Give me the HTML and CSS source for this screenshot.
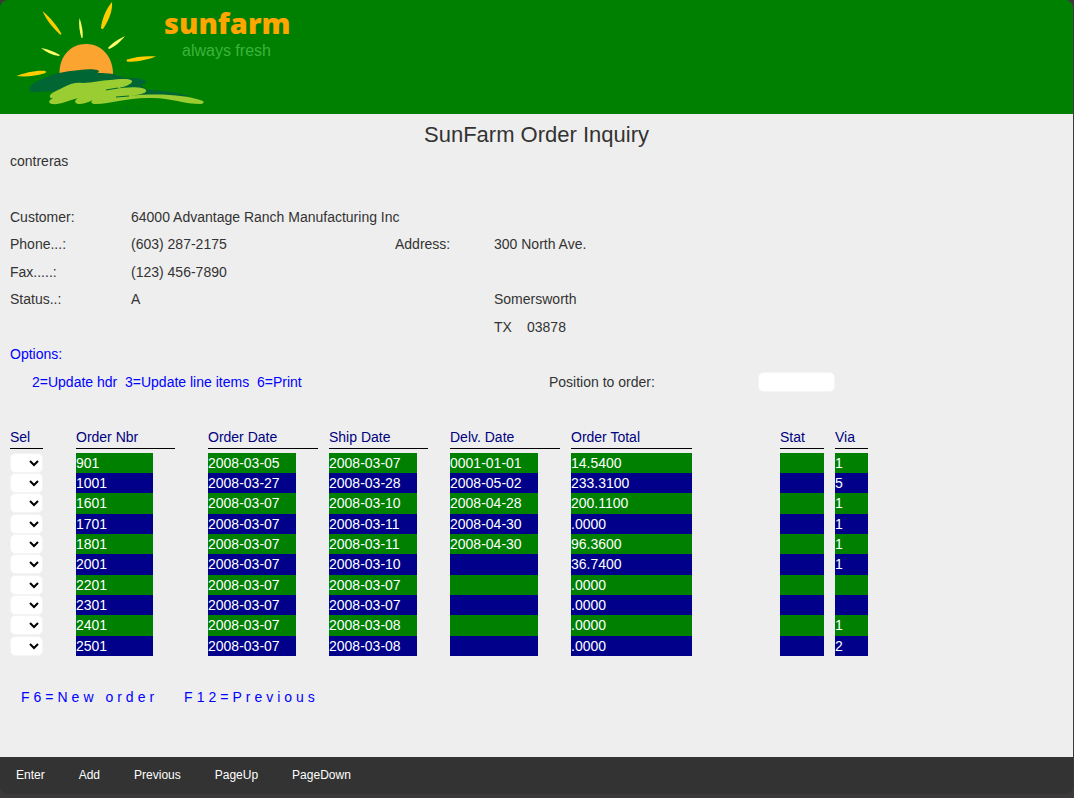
FILE: index.html
```html
<!DOCTYPE html>
<html lang="en">
<head>
<meta charset="utf-8">
<title>SunFarm Order Inquiry</title>
<link rel="stylesheet" href="styles.css">
</head>
<body>
<div class="app">
  <header class="banner">
    <svg class="logo" viewBox="0 0 210 110" width="210" height="110" aria-hidden="true">
      <path fill="#fba42f" d="M59.500 74C59 57 70 44 86 44s27 13 27 30z"/>
      <path fill="#ffcc00" d="M42.500 11C50 17 58 27 61.500 34q-1 1-2 0C52 27 46 19 42.500 11zM112 2c1 9-4 20-9 27q-2 0-2-1C102 19 106 9 112 2zM16.500 76c8-3 20-6 29-5q1 1 0 2c-9 3-20 4-29 3zM156 56.500c-8 3-20 6-29 5q-1-1 0-2c9-3 20-4 29-3z"/>
      <path fill="#ffff66" d="M79.500 18c2 6 4 14 3 20h-1c-2-6-3-14-2-20zM125 36c-4 5-10 11-16 13l-1-1c4-5 11-9 17-12zM41 48c6 1 14 4 19 7l-1 1c-7-1-13-4-18-8z"/>
      <path fill="#006633" d="M30 91C27 87 34 82 42 79C54 73 67 71 80 70C87 69 97 69 99 71q0 2-2 2C108 73 119 74 124 78C132 77 143 78 146 81q2 2-5 4C143 87 147 90 151 90C165 91 179 93 190 96C175 98 158 97 150 96L60 92C50 91 40 92 31 92z"/>
      <path fill="#9acd32" d="M50 97C48 94 58 90 64 87C71 83 77 82 83 83C92 83 102 80 110 80C118 79 131 78 132 81C133 84 124 87 115 89C125 87 143 86 146 90C148 93 139 95 129 96C158 93 187 95 203 101q2 2-2 3C183 104 169 97 148 98C125 98 111 104 96 104C91 104 90 102 93 100C85 104 78 105 76 103C74 102 76 99 78 98C68 101 59 105 52 104C47 103 49 99 55 98C52 99 50 98 50 97z"/>
      <path stroke="#006633" stroke-width="1" fill="none" d="M106 90l12-2M116 97l13-1M126 108h2M137 108h2"/>
    </svg>
    <div class="brand">
      <span class="brand-name">sunfarm</span>
      <span class="brand-motto">always fresh</span>
    </div>
  </header>

  <main class="content">
    <h1 class="title">SunFarm Order Inquiry</h1>
    <div class="row short">contreras</div>
    <div class="row"></div>
    <div class="row details"><span>Customer:</span><span>64000 Advantage Ranch Manufacturing Inc</span></div>
    <div class="row short details"><span>Phone...:</span><span>(603) 287-2175</span><span>Address:</span><span>300 North Ave.</span></div>
    <div class="row details"><span>Fax.....:</span><span>(123) 456-7890</span></div>
    <div class="row short details"><span>Status..:</span><span>A</span><span></span><span>Somersworth</span></div>
    <div class="row details"><span></span><span></span><span></span><span class="region"><span class="state">TX</span><span>03878</span></span></div>
    <div class="row short link">Options:</div>
    <div class="row options">
      <span class="link choices">2=Update hdr&nbsp; 3=Update line items&nbsp; 6=Print</span>
      <label class="position-label" for="position">Position to order:</label>
      <input class="position" id="position" type="text">
    </div>
    <div class="row short"></div>

    <table class="orders">
      <colgroup>
        <col class="c-sel"><col class="c-nbr"><col class="c-date"><col class="c-date"><col class="c-date"><col class="c-total"><col class="c-stat"><col class="c-via">
      </colgroup>
      <thead>
        <tr><th><div class="w3">Sel</div></th><th><div class="w9">Order Nbr</div></th><th><div class="w10">Order Date</div></th><th><div class="w9">Ship Date</div></th><th><div class="w10">Delv. Date</div></th><th><div class="w11">Order Total</div></th><th><div class="w4">Stat</div></th><th><div class="w3">Via</div></th></tr>
      </thead>
      <tbody>
        <tr><td><select class="sel" aria-label="Sel 901"><option></option><option>2</option><option>3</option><option>6</option></select></td><td><div class="w7">901</div></td><td><div class="w8">2008-03-05</div></td><td><div class="w8">2008-03-07</div></td><td><div class="w8">0001-01-01</div></td><td><div class="w11">14.5400</div></td><td><div class="w4"></div></td><td><div class="w3">1</div></td></tr>
        <tr><td><select class="sel" aria-label="Sel 1001"><option></option><option>2</option><option>3</option><option>6</option></select></td><td><div class="w7">1001</div></td><td><div class="w8">2008-03-27</div></td><td><div class="w8">2008-03-28</div></td><td><div class="w8">2008-05-02</div></td><td><div class="w11">233.3100</div></td><td><div class="w4"></div></td><td><div class="w3">5</div></td></tr>
        <tr><td><select class="sel" aria-label="Sel 1601"><option></option><option>2</option><option>3</option><option>6</option></select></td><td><div class="w7">1601</div></td><td><div class="w8">2008-03-07</div></td><td><div class="w8">2008-03-10</div></td><td><div class="w8">2008-04-28</div></td><td><div class="w11">200.1100</div></td><td><div class="w4"></div></td><td><div class="w3">1</div></td></tr>
        <tr><td><select class="sel" aria-label="Sel 1701"><option></option><option>2</option><option>3</option><option>6</option></select></td><td><div class="w7">1701</div></td><td><div class="w8">2008-03-07</div></td><td><div class="w8">2008-03-11</div></td><td><div class="w8">2008-04-30</div></td><td><div class="w11">.0000</div></td><td><div class="w4"></div></td><td><div class="w3">1</div></td></tr>
        <tr><td><select class="sel" aria-label="Sel 1801"><option></option><option>2</option><option>3</option><option>6</option></select></td><td><div class="w7">1801</div></td><td><div class="w8">2008-03-07</div></td><td><div class="w8">2008-03-11</div></td><td><div class="w8">2008-04-30</div></td><td><div class="w11">96.3600</div></td><td><div class="w4"></div></td><td><div class="w3">1</div></td></tr>
        <tr><td><select class="sel" aria-label="Sel 2001"><option></option><option>2</option><option>3</option><option>6</option></select></td><td><div class="w7">2001</div></td><td><div class="w8">2008-03-07</div></td><td><div class="w8">2008-03-10</div></td><td><div class="w8"></div></td><td><div class="w11">36.7400</div></td><td><div class="w4"></div></td><td><div class="w3">1</div></td></tr>
        <tr><td><select class="sel" aria-label="Sel 2201"><option></option><option>2</option><option>3</option><option>6</option></select></td><td><div class="w7">2201</div></td><td><div class="w8">2008-03-07</div></td><td><div class="w8">2008-03-07</div></td><td><div class="w8"></div></td><td><div class="w11">.0000</div></td><td><div class="w4"></div></td><td><div class="w3"></div></td></tr>
        <tr><td><select class="sel" aria-label="Sel 2301"><option></option><option>2</option><option>3</option><option>6</option></select></td><td><div class="w7">2301</div></td><td><div class="w8">2008-03-07</div></td><td><div class="w8">2008-03-07</div></td><td><div class="w8"></div></td><td><div class="w11">.0000</div></td><td><div class="w4"></div></td><td><div class="w3"></div></td></tr>
        <tr><td><select class="sel" aria-label="Sel 2401"><option></option><option>2</option><option>3</option><option>6</option></select></td><td><div class="w7">2401</div></td><td><div class="w8">2008-03-07</div></td><td><div class="w8">2008-03-08</div></td><td><div class="w8"></div></td><td><div class="w11">.0000</div></td><td><div class="w4"></div></td><td><div class="w3">1</div></td></tr>
        <tr><td><select class="sel" aria-label="Sel 2501"><option></option><option>2</option><option>3</option><option>6</option></select></td><td><div class="w7">2501</div></td><td><div class="w8">2008-03-07</div></td><td><div class="w8">2008-03-08</div></td><td><div class="w8"></div></td><td><div class="w11">.0000</div></td><td><div class="w4"></div></td><td><div class="w3">2</div></td></tr>
      </tbody>
    </table>

    <nav class="keys">
      <a class="key" href="#new">F6=New order</a>
      <a class="key" href="#previous">F12=Previous</a>
    </nav>
  </main>

  <footer class="actions">
    <button class="action" type="button">Enter</button>
    <button class="action" type="button">Add</button>
    <button class="action" type="button">Previous</button>
    <button class="action" type="button">PageUp</button>
    <button class="action" type="button">PageDown</button>
  </footer>
</div>
</body>
</html>
```
FILE: styles.css
```css
* { box-sizing: border-box; }

body {
  margin: 0;
  min-height: 100vh;
  display: flex;
  padding: 0 1px 4px 0;
  background: #3b393a;
  color: #333;
  font: 14px/20px "Liberation Sans", Arial, sans-serif;
}

.app {
  flex: 1;
  display: flex;
  flex-direction: column;
  overflow: hidden;
  border-radius: 8px;
}

.banner {
  display: flex;
  height: 114px;
  background: green;
}

.logo { flex: none; margin-right: -46px; }

.brand { padding-top: 4px; }

.brand-name {
  display: block;
  color: orange;
  font: 800 29px/38px "Open Sans", sans-serif;
}

.brand-motto {
  display: block;
  padding-left: 18px;
  color: #3cb43c;
  font-size: 16px;
  line-height: 18px;
}

.content {
  flex: 1;
  padding: 0 10px;
  background: #eee;
}

.title {
  margin: 0;
  padding: 9px 0 1px;
  font-size: 22px;
  font-weight: 400;
  line-height: 24px;
  text-align: center;
}

.row { height: 28px; line-height: 28px; }
.row.short { height: 27px; line-height: 27px; }

.details {
  display: grid;
  grid-template-columns: 121px 264px 99px 1fr;
  white-space: nowrap;
}

.region { display: flex; }
.state { width: 33px; }

.link { color: #00f; }

.options { display: flex; align-items: center; }
.choices { width: 539px; padding-left: 22px; }
.position-label { width: 209px; }

.position {
  width: 77px;
  height: 20px;
  border: 1px solid #f4f4f4;
  border-radius: 5px;
  background: #fff;
  font: inherit;
}

.orders {
  width: 858px;
  table-layout: fixed;
  border-collapse: collapse;
}

.c-sel { width: 66px; }
.c-nbr { width: 132px; }
.c-date { width: 121px; }
.c-total { width: 209px; }
.c-stat { width: 55px; }
.c-via { width: 33px; }

.orders th {
  padding: 0 0 4px;
  color: navy;
  font-weight: 400;
  text-align: left;
}

.orders th div {
  height: 26px;
  border-bottom: 1px solid #000;
  line-height: 28px;
}

.orders td { padding: 0; vertical-align: top; }

.orders td div {
  height: 20px;
  background: green;
  color: #fff;
}

.orders tr:nth-child(even) td div { background: darkblue; }
.orders tr:nth-child(3n) td div { height: 21px; }

.w3 { width: 33px; }
.w4 { width: 44px; }
.w7 { width: 77px; }
.w8 { width: 88px; }
.w9 { width: 99px; }
.w10 { width: 110px; }
.w11 { width: 121px; }

.sel {
  display: block;
  width: 33px;
  height: 20px;
  border: 1px solid #f4f4f4;
  border-radius: 5px;
  background: #fff;
  font: inherit;
}

.keys {
  display: flex;
  gap: 26px;
  padding: 31px 11px;
}

.key {
  color: #00f;
  letter-spacing: 4px;
  text-decoration: none;
}

.actions {
  display: flex;
  align-items: flex-start;
  gap: 34px;
  height: 37px;
  padding: 0 16px;
  background: #333;
}

.action {
  padding: 0;
  border: 0;
  background: none;
  color: #fff;
  font: 12px/36px "Liberation Sans", Arial, sans-serif;
}
```
